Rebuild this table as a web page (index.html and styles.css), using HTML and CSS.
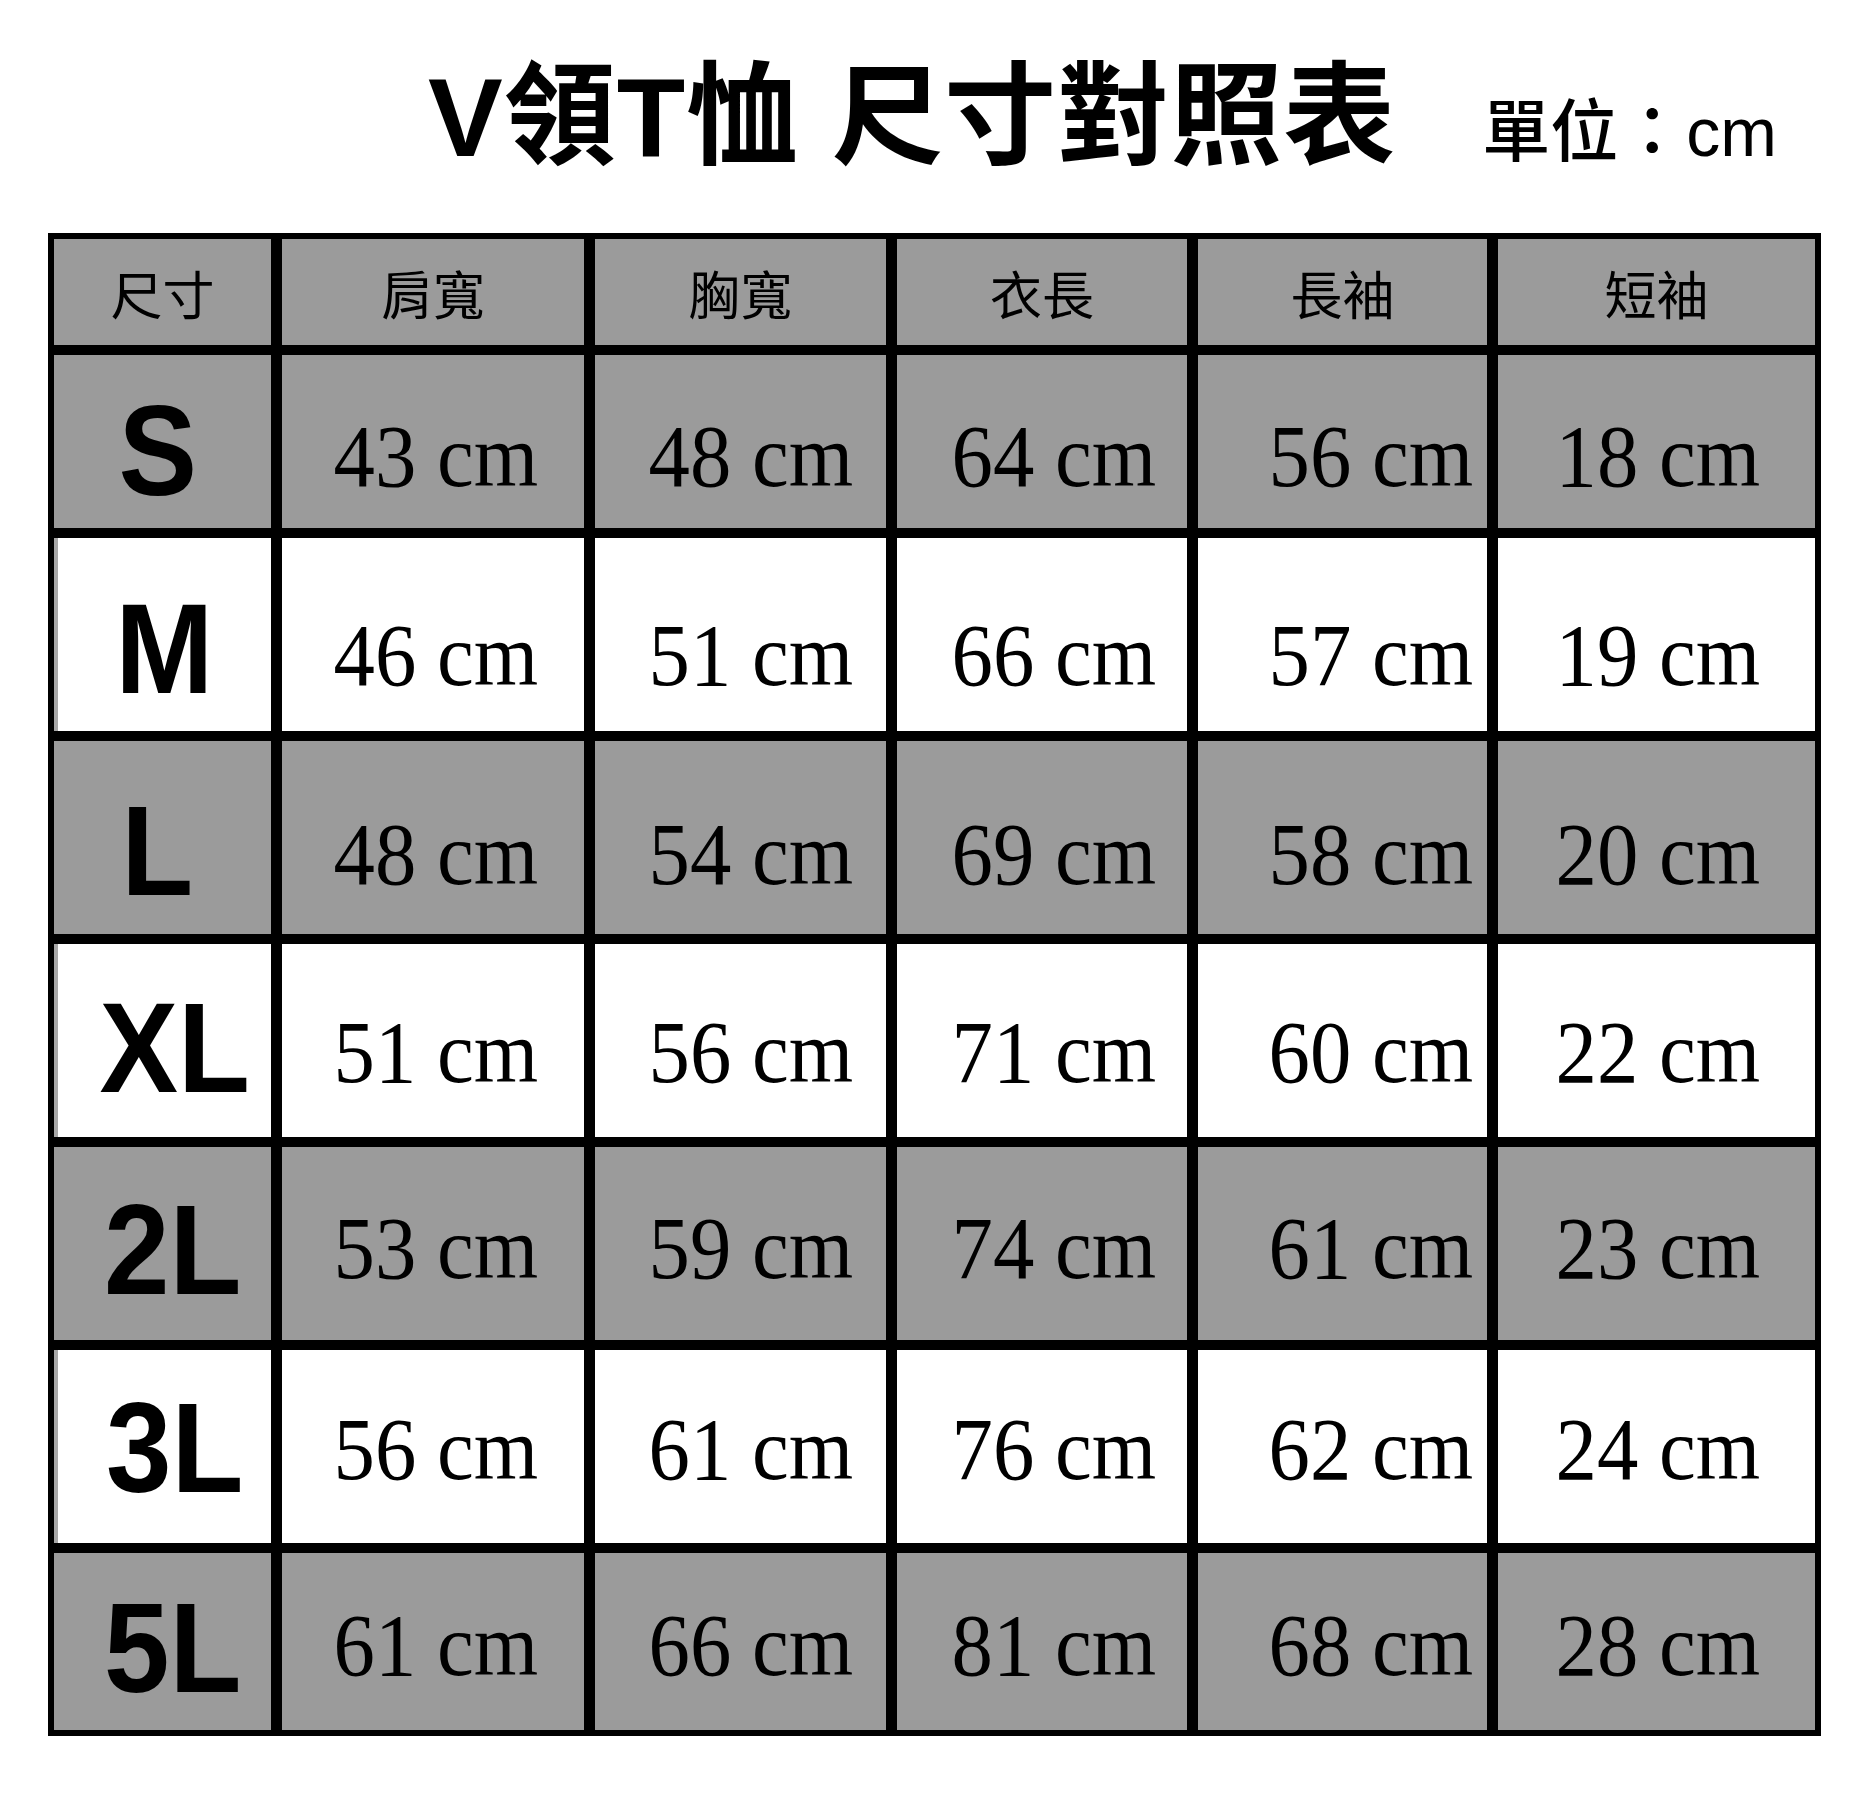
FILE: index.html
```html
<!DOCTYPE html>
<html lang="zh-Hant">
<head>
<meta charset="utf-8">
<title>V領T恤 尺寸對照表</title>
<link rel="stylesheet" href="styles.css">
</head>
<body>
<div class="page">
  <div class="title-row">
    <h1 class="title">V領T恤 尺寸對照表</h1>
    <div class="unit">單位：cm</div>
  </div>
  <div class="chart">
    <div class="row">
      <div class="cell head">尺寸</div>
      <div class="cell head">肩寬</div>
      <div class="cell head">胸寬</div>
      <div class="cell head">衣長</div>
      <div class="cell head">長袖</div>
      <div class="cell head">短袖</div>
    </div>

    <div class="row r-s grey">
      <div class="cell size one"><span>S</span></div>
      <div class="cell num c2"><span>43 cm</span></div>
      <div class="cell num c3"><span>48 cm</span></div>
      <div class="cell num c4"><span>64 cm</span></div>
      <div class="cell num c5"><span>56 cm</span></div>
      <div class="cell num c6"><span>18 cm</span></div>
    </div>

    <div class="row r-m white">
      <div class="cell size one"><span>M</span></div>
      <div class="cell num c2"><span>46 cm</span></div>
      <div class="cell num c3"><span>51 cm</span></div>
      <div class="cell num c4"><span>66 cm</span></div>
      <div class="cell num c5"><span>57 cm</span></div>
      <div class="cell num c6"><span>19 cm</span></div>
    </div>

    <div class="row r-l grey">
      <div class="cell size one"><span>L</span></div>
      <div class="cell num c2"><span>48 cm</span></div>
      <div class="cell num c3"><span>54 cm</span></div>
      <div class="cell num c4"><span>69 cm</span></div>
      <div class="cell num c5"><span>58 cm</span></div>
      <div class="cell num c6"><span>20 cm</span></div>
    </div>

    <div class="row r-xl white">
      <div class="cell size two"><span>XL</span></div>
      <div class="cell num c2"><span>51 cm</span></div>
      <div class="cell num c3"><span>56 cm</span></div>
      <div class="cell num c4"><span>71 cm</span></div>
      <div class="cell num c5"><span>60 cm</span></div>
      <div class="cell num c6"><span>22 cm</span></div>
    </div>

    <div class="row r-2l grey">
      <div class="cell size two"><span>2L</span></div>
      <div class="cell num c2"><span>53 cm</span></div>
      <div class="cell num c3"><span>59 cm</span></div>
      <div class="cell num c4"><span>74 cm</span></div>
      <div class="cell num c5"><span>61 cm</span></div>
      <div class="cell num c6"><span>23 cm</span></div>
    </div>

    <div class="row r-3l white">
      <div class="cell size two"><span>3L</span></div>
      <div class="cell num c2"><span>56 cm</span></div>
      <div class="cell num c3"><span>61 cm</span></div>
      <div class="cell num c4"><span>76 cm</span></div>
      <div class="cell num c5"><span>62 cm</span></div>
      <div class="cell num c6"><span>24 cm</span></div>
    </div>

    <div class="row r-5l grey">
      <div class="cell size two"><span>5L</span></div>
      <div class="cell num c2"><span>61 cm</span></div>
      <div class="cell num c3"><span>66 cm</span></div>
      <div class="cell num c4"><span>81 cm</span></div>
      <div class="cell num c5"><span>68 cm</span></div>
      <div class="cell num c6"><span>28 cm</span></div>
    </div>
  </div>
</div>
</body>
</html>
```
FILE: styles.css
```css
html, body {
  margin: 0;
  padding: 0;
  background: #ffffff;
}

.page {
  width: 1865px;
  height: 1798px;
  overflow: hidden;
  background: #ffffff;
}

.title-row {
  display: flex;
  align-items: baseline;
  height: 233px;
  box-sizing: border-box;
  padding-left: 428px;
  padding-top: 48px;
}

.title {
  margin: 0;
  font-family: "Liberation Sans", "Noto Sans CJK TC", sans-serif;
  font-weight: 700;
  font-size: 112px;
  line-height: 140px;
  color: #000;
  letter-spacing: 1px;
}

.unit {
  margin-left: 86px;
  font-family: "Liberation Sans", "Noto Sans CJK TC", sans-serif;
  font-weight: 500;
  font-size: 68px;
  color: #000;
}

.chart {
  margin-left: 48px;
  width: 1773px;
  box-sizing: border-box;
  background: #000;
  padding: 6px;
  display: grid;
  grid-template-columns: 217px 302px 291px 290px 289px 317px;
  grid-template-rows: 106px 173px 193px 193px 193px 193px 193px 177px;
  column-gap: 11px;
  row-gap: 10px;
}

.row {
  display: contents;
}

.cell {
  display: flex;
  align-items: center;
  justify-content: center;
  box-sizing: border-box;
  color: #000;
}

.head {
  background: #9b9b9b;
  font-family: "Noto Sans CJK TC", sans-serif;
  font-weight: 400;
  font-size: 52px;
}

.grey .cell {
  background: #9b9b9b;
}

.white .cell {
  background: #ffffff;
}

.size {
  font-family: "Liberation Sans", Arial, sans-serif;
  font-weight: 700;
  font-size: 128px;
}

.size span {
  display: inline-block;
  transform: scaleX(0.92);
}

.size.one { padding-right: 10px; }
.size.two { padding-left: 20px; }
.r-m .size.one { padding-right: 0; }

.white .size {
  border-left: 4px solid #a8a8a8;
}

.num {
  font-family: "Liberation Serif", "Times New Roman", serif;
  font-size: 88px;
}

.num span {
  display: inline-block;
  transform: scaleX(0.94);
}

.c2 { padding-left: 6px; }
.c3 { padding-left: 20px; }
.c4 { padding-left: 24px; }
.c5 { padding-left: 56px; }
.c6 { padding-left: 2px; }

/* vertical placement of the text per row */
.r-s .size { padding-top: 17px; }
.r-m .size { padding-top: 27px; }
.r-l .size { padding-top: 25px; }
.r-xl .size { padding-top: 13px; }
.r-2l .size { padding-top: 11px; }
.r-3l .size { padding-top: 1px; }
.r-5l .size { padding-top: 11px; }

.r-s .num { padding-top: 30px; }
.r-m .num { padding-top: 42px; }
.r-l .num { padding-top: 34px; }
.r-xl .num { padding-top: 24px; }
.r-2l .num { padding-top: 10px; }
.r-3l .num { padding-top: 6px; }
.r-5l .num { padding-top: 8px; }
```
